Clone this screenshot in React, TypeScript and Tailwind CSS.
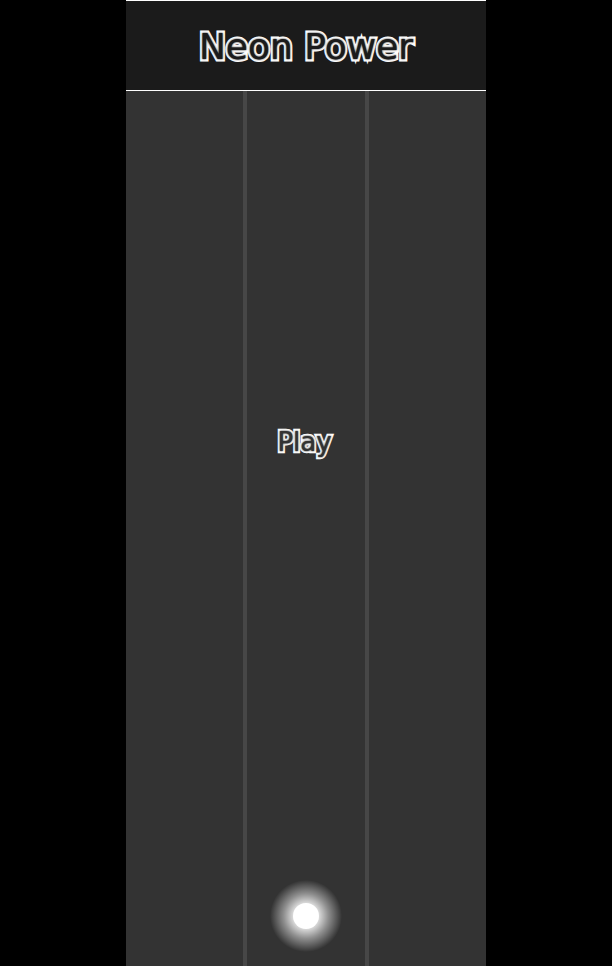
export default function App() {
  const lanes = [0, 1, 2]
  return (
    <div className="w-full h-[966px] bg-black flex justify-center overflow-hidden font-['DejaVu_Sans',sans-serif]">
      <div className="w-[360px] h-full flex flex-col">
        <header className="h-[91px] shrink-0 bg-[#1b1b1b] border-t border-b border-white flex items-center justify-center">
          <h1 className="text-[36px] leading-none text-[#1b1b1b] [-webkit-text-stroke:5px_#ffffff] [paint-order:stroke_fill] [text-shadow:0_0_2px_#000000] pt-[3px]">
            Neon Power
          </h1>
        </header>

        <div className="relative flex-1 flex bg-[#333333]">
          {lanes.map((i) => (
            <div
              key={i}
              className={`flex-1 ${i < 2 ? 'border-r-4 border-[#474747]' : ''}`}
            />
          ))}

          {/* start overlay */}
          <button className="absolute left-0 right-0 top-[338px] mx-auto w-fit pr-[3px] text-[26px] leading-none text-[#333333] [-webkit-text-stroke:4.5px_#ffffff] [paint-order:stroke_fill] [text-shadow:0_0_2px_#000000]">
            Play
          </button>

          {/* player ball */}
          <div className="absolute left-1/2 -translate-x-1/2 bottom-[14px] w-[72px] h-[72px] rounded-full flex items-center justify-center bg-[radial-gradient(circle_closest-side,rgba(255,255,255,0.9)_30%,rgba(255,255,255,0.45)_62%,rgba(255,255,255,0)_100%)]">
            <div className="w-[26px] h-[26px] rounded-full bg-white" />
          </div>
        </div>
      </div>
    </div>
  )
}
